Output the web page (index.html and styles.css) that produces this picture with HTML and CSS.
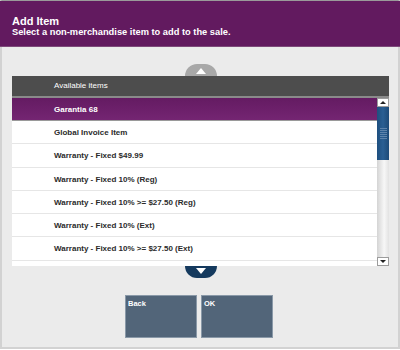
FILE: index.html
```html
<!DOCTYPE html>
<html lang="en">

    <head>
        <meta charset="UTF-8">
        <meta name="viewport" content="width=device-width, initial-scale=1.0">
        <title>Add Item</title>
        <link rel="stylesheet" href="styles.css">
    </head>

    <body>
        <div class="frame">
            <header class="title-bar">
                <h1>Add Item</h1>
                <p>Select a non-merchandise item to add to the sale.</p>
            </header>

            <div class="content">
                <div class="pager pager-up">
                    <svg width="10" height="6" viewBox="0 0 10 6"><polygon points="5,0 10,6 0,6" fill="#fff"/></svg>
                </div>

                <div class="list">
                    <div class="list-head">Available items</div>
                    <div class="list-body">
                        <div class="rows">
                            <div class="row selected">Garantia 68</div>
                            <div class="row">Global Invoice Item</div>
                            <div class="row">Warranty - Fixed $49.99</div>
                            <div class="row">Warranty - Fixed 10% (Reg)</div>
                            <div class="row">Warranty - Fixed 10% &gt;= $27.50 (Reg)</div>
                            <div class="row">Warranty - Fixed 10% (Ext)</div>
                            <div class="row">Warranty - Fixed 10% &gt;= $27.50 (Ext)</div>
                        </div>
                        <div class="scrollbar">
                            <div class="scroll-btn">
                                <svg width="6" height="3" viewBox="0 0 6 3"><polygon points="3,0 6,3 0,3" fill="#222"/></svg>
                            </div>
                            <div class="track">
                                <div class="thumb">
                                    <span></span><span></span><span></span><span></span><span></span><span></span>
                                </div>
                            </div>
                            <div class="scroll-btn">
                                <svg width="6" height="3" viewBox="0 0 6 3"><polygon points="0,0 6,0 3,3" fill="#222"/></svg>
                            </div>
                        </div>
                    </div>
                </div>

                <div class="pager pager-down">
                    <svg width="10" height="6" viewBox="0 0 10 6"><polygon points="0,0 10,0 5,6" fill="#fff"/></svg>
                </div>

                <div class="actions">
                    <button class="action">Back</button>
                    <button class="action">OK</button>
                </div>
            </div>
        </div>
    </body>

</html>
```

FILE: styles.css
```css
* {
    margin: 0;
    padding: 0;
    box-sizing: border-box;
    font-family: "Liberation Sans", Arial, sans-serif;
}

body {
    width: 400px;
    height: 350px;
    overflow: hidden;
}

.frame {
    width: 400px;
    height: 349px;
    display: flex;
    flex-direction: column;
    background-color: #ebebeb;
    border: 2px solid #d2d2d2;
    border-top: 1px solid #9a9a9a;
}

.title-bar {
    height: 46px;
    margin: 0 -2px;
    padding: 14px 0 0 12px;
    background-color: #621a5f;
    border-bottom: 1px solid #7d4a7a;
    color: #fff;
}

.title-bar h1 {
    font-size: 11px;
    font-weight: bold;
    line-height: 12px;
}

.title-bar p {
    font-size: 9.3px;
    font-weight: bold;
    line-height: 11px;
}

.content {
    flex-grow: 1;
    display: flex;
    flex-direction: column;
    padding: 0 9px 0 10px;
}

.pager {
    align-self: center;
    width: 32px;
    height: 12px;
    display: flex;
    align-items: center;
    justify-content: center;
}

.pager-up {
    margin-top: 17px;
    background-color: #a8a8a8;
    border-radius: 16px 16px 0 0;
    padding-top: 2px;
}

.pager-down {
    background-color: #153a5e;
    border-radius: 0 0 16px 16px;
    padding-bottom: 3px;
}

.list {
    display: flex;
    flex-direction: column;
    background-color: #fff;
}

.list-head {
    height: 22px;
    padding: 5px 0 0 42px;
    background-color: #4d4d4d;
    border-bottom: 2px solid #8a8a8a;
    color: #fff;
    font-size: 8px;
}

.list-body {
    display: flex;
    height: 168px;
}

.rows {
    flex-grow: 1;
    overflow: hidden;
}

.row {
    height: 23.3px;
    padding: 7px 0 0 42px;
    border-bottom: 1px solid #e6e6e6;
    color: #2b2b2b;
    font-size: 8px;
    font-weight: bold;
    white-space: nowrap;
}

.row.selected {
    height: 23px;
    background: linear-gradient(#641b62, #742572);
    border-bottom: 1px solid #9a9a9a;
    color: #fff;
}

.scrollbar {
    width: 12px;
    display: flex;
    flex-direction: column;
    background: linear-gradient(to right, #d4d4d4, #f7f7f7 60%, #e2e2e2);
}

.scroll-btn {
    height: 9px;
    display: flex;
    align-items: center;
    justify-content: center;
    background-color: #fff;
    border: 1px solid #9c9c9c;
}

.track {
    flex-grow: 1;
}

.thumb {
    height: 53px;
    display: flex;
    flex-direction: column;
    justify-content: center;
    gap: 1px;
    background: linear-gradient(to right, #1e4f7f, #2a5f93 50%, #1d4a77);
}

.thumb span {
    display: block;
    width: 7px;
    height: 1px;
    margin-left: 3px;
    background-color: #5d83ab;
}

.actions {
    display: flex;
    justify-content: center;
    gap: 4px;
    margin-top: 17px;
    padding-right: 3px;
}

.action {
    width: 72px;
    height: 43px;
    padding: 3px 0 0 2px;
    background-color: #526579;
    border: 1px solid #8a99a8;
    color: #fff;
    font-size: 7.5px;
    font-weight: bold;
    text-align: left;
    display: flex;
    align-items: flex-start;
}
```
